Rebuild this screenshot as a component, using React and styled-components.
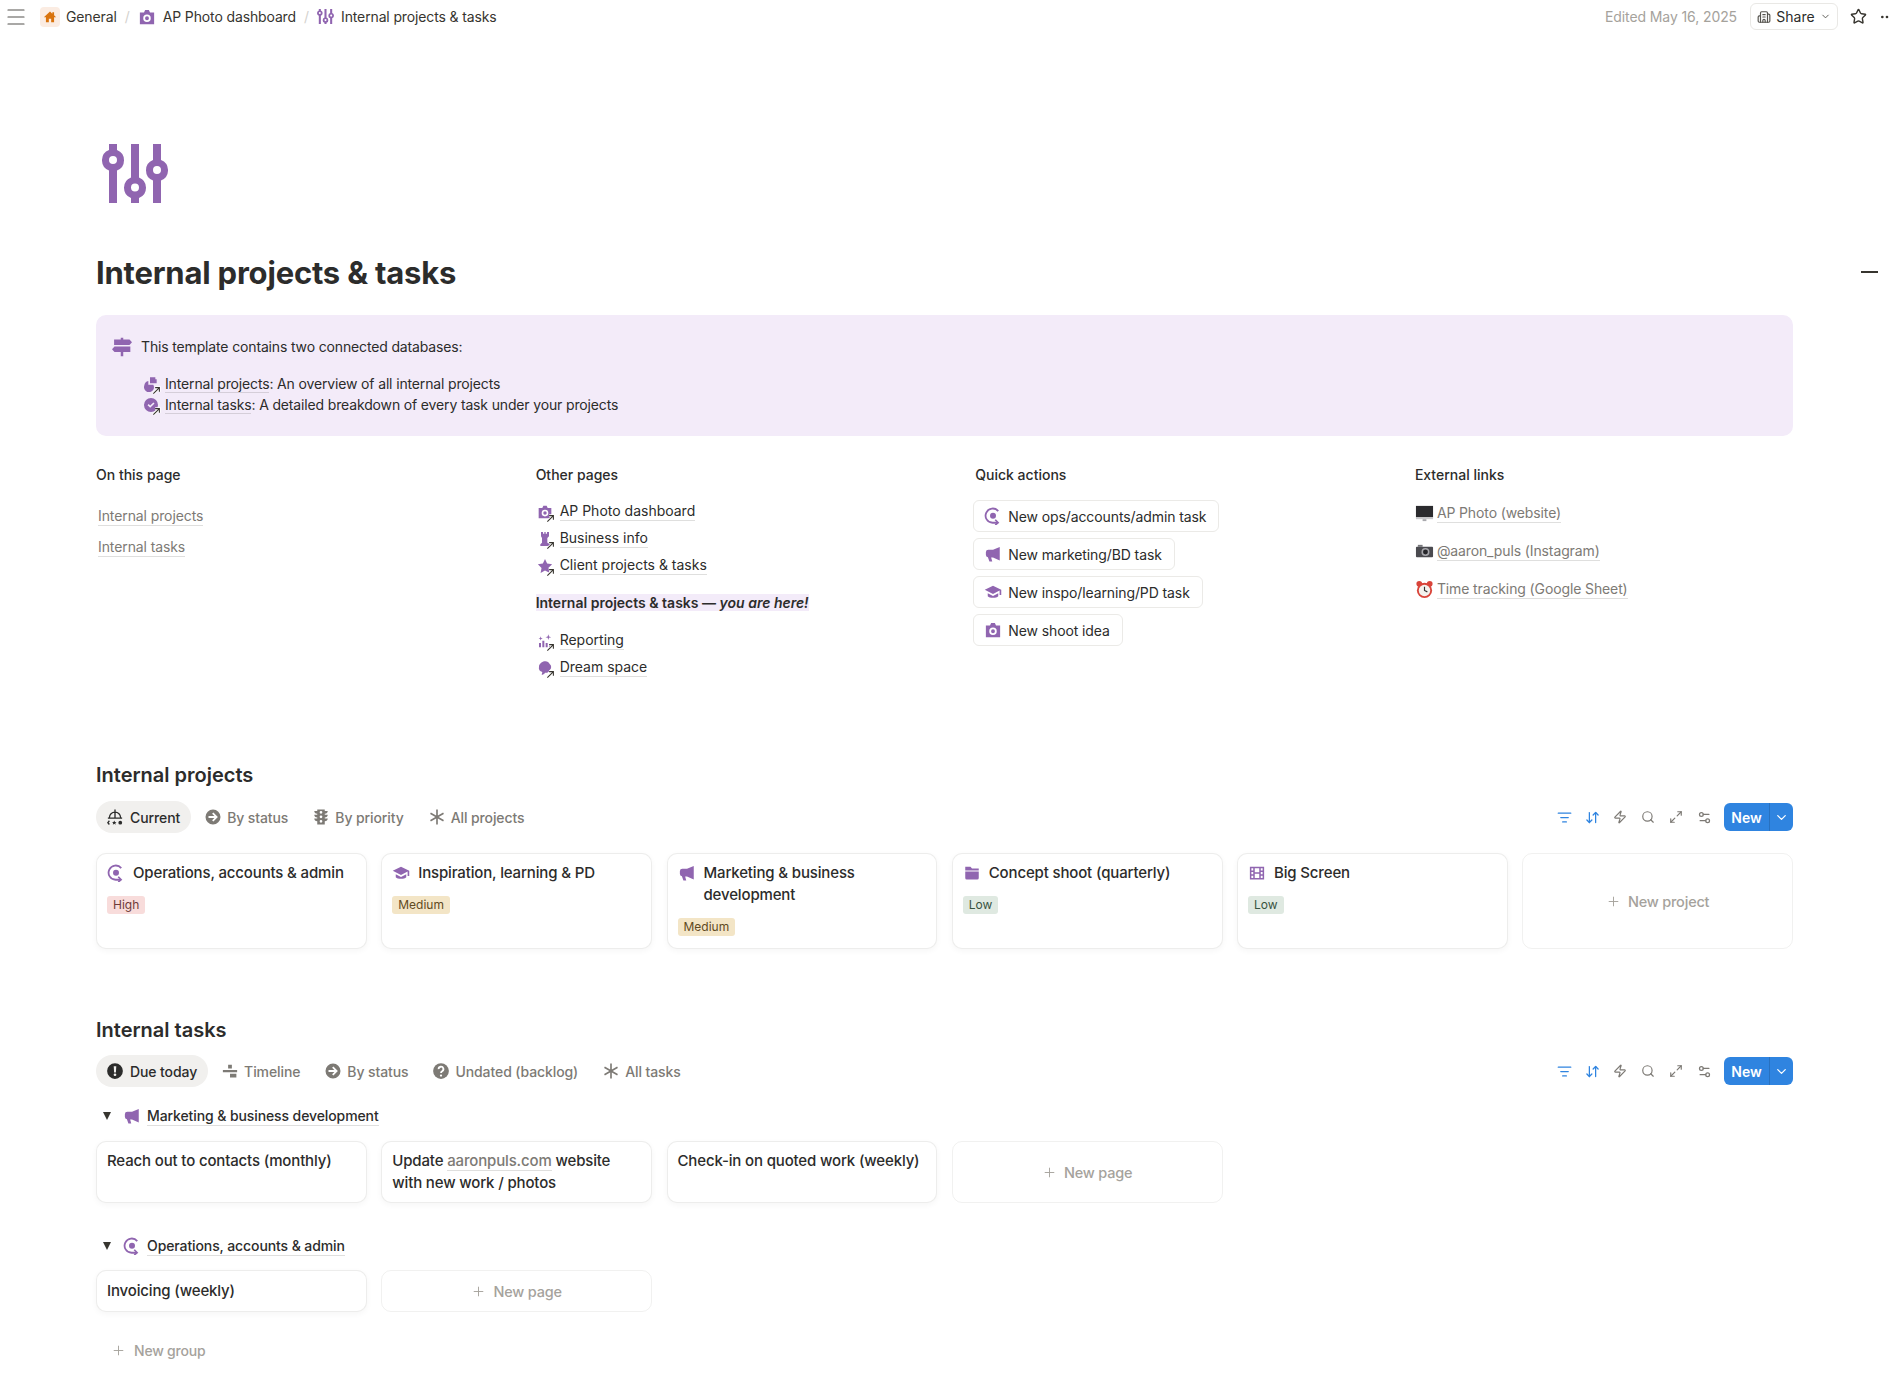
import React from 'react';
import styled, { createGlobalStyle } from 'styled-components';
import {
  ArrowDownUp,
  Building2,
  ChevronDown,
  ListFilter,
  Maximize2,
  Menu,
  MoreHorizontal,
  Plus,
  Search,
  Settings2,
  Star,
  Zap,
} from 'lucide-react';

const theme = {
  text: '#2c2c2b',
  muted: '#7d7a75',
  faint: '#a5a29c',
  purple: '#9065b0',
  callout: '#f3ebf9',
  line: 'rgba(55, 53, 47, 0.16)',
  blue: '#2f84e0',
};

const SLIDERS_PATH = 'M7 0h8v6a11 11 0 0 1 0 20.500V59H7V26.500A11 11 0 0 1 7 6zM11 12a4 4 0 1 0 0 8 4 4 0 0 0 0-8zM29 0h8v33.500a11 11 0 0 1 0 20.500V59h-8v-5a11 11 0 0 1 0-20.500zM33 39.500a4 4 0 1 0 0 8 4 4 0 0 0 0-8zM51 0h8v16a11 11 0 0 1 0 20.500V59h-8V36.500A11 11 0 0 1 51 16zM55 22a4 4 0 1 0 0 8 4 4 0 0 0 0-8z';

const GlobalStyle = createGlobalStyle`
  html, body {
    margin: 0;
    padding: 0;
    height: 100%;
    overflow: hidden;
    background: #fff;
  }
  body {
    font-family: Inter, "Noto Sans", "Liberation Sans", sans-serif;
    color: ${theme.text};
    font-size: 14px;
    -webkit-font-smoothing: antialiased;
  }
`;

// notion style glyphs, drawn on a 24 box
const GLYPHS = {
  home: <path d="M12 2.500 1.500 12.500H5V21h5v-6h4v6h5v-8.500h3.500L19 9.200V4h-3v2.300z" />,
  camera: <path fillRule="evenodd" d="M8 6l1.500-3.500h5L16 6h5.500v15.500h-19V6zM12 8.600a5 5 0 1 0 0 10 5 5 0 0 0 0-10zM12 11a2.600 2.600 0 1 1 0 5.200 2.600 2.600 0 0 1 0-5.200z" />,
  sliders: <path fillRule="evenodd" transform="translate(0 1.300) scale(.3636)" d={SLIDERS_PATH} />,
  signpost: <path d="M10.500 1h3v2H21l3 3.200L21 9.500H2.500V3h8zM3 11.500h19V18h-8.500v5h-3v-5H3l-3-3.200z" />,
  shapes: <path d="M10.500 2h8v3h2v6h-10zM2 14a7.500 7.500 0 0 1 6-6.500V13h7.500A7.500 7.500 0 1 1 2 14z" />,
  badge: <path fillRule="evenodd" d="M12 1.500a10.500 10.500 0 1 0 0 21 10.500 10.500 0 0 0 0-21zM6.800 12.300l1.700-1.700 2.300 2.300 4.800-4.800 1.700 1.700-6.500 6.500z" />,
  rook: <path d="M6 1.500h3V4h2V1.500h2V4h2V1.500h3V8l-2.500 2.500v7L20 20v2.500H5V20l2.500-2.500v-7L6 8z" />,
  star: <path d="M12 1.500l3.200 6.900 7.500.9-5.500 5.200 1.400 7.500L12 18.800 5.400 22.500l1.400-7.500L1.300 9.300l7.500-.9z" />,
  reporting: <path d="M3 21.500V15h3v6.500zM8 21.500V11.500h3v10zM13 21.500V15h3v6.500zM18 21.500V17h3v4.500zM17 2l1 3.200 3.300 1-3.300 1-1 3.300-1-3.300-3.300-1 3.300-1zM5.500 5l.8 2.400 2.400.8-2.400.8-.8 2.400-.8-2.400-2.400-.8 2.400-.8z" />,
  blob: <path d="M11 2c3-1 7 1 8 4 3 2 3 7 0 9-1 3-4 5-7 4-1 2-3 3-5 3l1-4C4 17 2 14 3 10c0-4 4-7 8-8z" />,
  ops: (
    <>
      <path d="M19 5.500A9.500 9.500 0 1 0 11.500 21H18" fill="none" stroke="currentColor" strokeWidth="2.400" />
      <path d="M15 17l3.800 4-3.800 3" fill="none" stroke="currentColor" strokeWidth="2.200" />
      <circle cx="12" cy="11.500" r="4" />
    </>
  ),
  megaphone: <path d="M21 2.500v18l-9-4H9.500l1.500 5.500H7.200l-2-5.700a3.300 3.300 0 0 1-2.700-3.300v-3.500a3.300 3.300 0 0 1 3.300-3.200H12z" />,
  cap: <path d="M12 3.500 1 9l11 5.500 8.800-4.400V16H23V9zM5 13.800v3.700c2.500 3 11.500 3 14 0v-3.700l-7 3.500z" />,
  folder: <path d="M3 3.500h7l2 2.500h9v2.500H3zM3 10h18v8.500a2 2 0 0 1-2 2H5a2 2 0 0 1-2-2z" />,
  film: <path fillRule="evenodd" d="M2.500 3.500h19v17h-19zM4.500 5.500v3H7v-3zM4.500 10.500v3H7v-3zM4.500 15.500v3H7v-3zM17 5.500v3h2.500v-3zM17 10.500v3h2.500v-3zM17 15.500v3h2.500v-3zM9 5.500V11h6V5.500zM9 13v5.500h6V13z" />,
  arrowCircle: <path fillRule="evenodd" d="M12 2a10 10 0 1 0 0 20 10 10 0 0 0 0-20zM12.500 6l6 6-6 6-1.700-1.700 3.100-3.100H6v-2.400h7.900l-3.100-3.100z" />,
  traffic: <path fillRule="evenodd" d="M7 2h10v2h4c0 2-1.500 3.500-4 3.500V9h4c0 2-1.500 3.500-4 3.500V14h4c0 2-1.500 3.500-4 3.500V22H7v-4.500C4.500 17.500 3 16 3 14h4v-1.500C4.500 12.500 3 11 3 9h4V7.500C4.500 7.500 3 6 3 4h4zM12 4a1.800 1.800 0 1 0 0 3.600A1.800 1.800 0 0 0 12 4zM12 10a1.800 1.800 0 1 0 0 3.600 1.800 1.800 0 0 0 0-3.600zM12 16a1.800 1.800 0 1 0 0 3.600 1.800 1.800 0 0 0 0-3.600z" />,
  asterisk: <path d="M12 2v20M3.300 7l17.400 10M20.700 7 3.300 17" fill="none" stroke="currentColor" strokeWidth="2.200" />,
  alert: <path fillRule="evenodd" d="M12 1.500a10.500 10.500 0 1 0 0 21 10.500 10.500 0 0 0 0-21zM10.300 5.500h3.400l-.5 8.500h-2.400zM12 15.200a1.800 1.800 0 1 1 0 3.600 1.800 1.800 0 0 1 0-3.600z" />,
  timeline: <path d="M9.500 3.500h5v5h-5zM2.500 10.500h19v3h-19zM12 15.500h8.500v5H12z" />,
  question: (
    <>
      <circle cx="12" cy="12" r="10.500" />
      <path d="M8.800 9.500a3.200 3.200 0 1 1 4.700 2.800c-1 .6-1.500 1-1.500 2.200" fill="none" stroke="#fff" strokeWidth="2.400" />
      <circle cx="12" cy="18" r="1.500" fill="#fff" />
    </>
  ),
  org: (
    <>
      <path d="M4.500 13a7.500 7.500 0 0 1 15 0M2.500 13.500h19M12 2v12" fill="none" stroke="currentColor" strokeWidth="1.800" />
      <path d="M4.500 17 2.500 19.500l2 2.500" fill="none" stroke="currentColor" strokeWidth="1.800" />
      <path d="M11 16.500l.9 2 2.100.2-1.600 1.400.5 2.100-1.900-1.100-1.900 1.100.5-2.100-1.600-1.400 2.100-.2z" />
      <circle cx="19" cy="19.500" r="2.500" />
    </>
  ),
};

const GlyphSvg = styled.svg`
  width: ${(p) => p.$size || 16}px;
  height: ${(p) => p.$size || 16}px;
  flex: none;
  display: block;
  color: ${(p) => p.$color || theme.purple};
  fill: currentColor;
`;

const Glyph = ({ name, size, color }) => (
  <GlyphSvg viewBox="0 0 24 24" $size={size} $color={color}>
    {GLYPHS[name]}
  </GlyphSvg>
);

const LinkArrow = styled.svg`
  position: absolute;
  right: -2px;
  bottom: -3px;
  width: 9px;
  height: 9px;
  fill: none;
  stroke: #37352f;
  stroke-width: 1.200;
`;

const MentionIcon = styled.span`
  position: relative;
  display: block;
  flex: none;
  width: 16px;
  height: 16px;
`;

const Mention = ({ name }) => (
  <MentionIcon>
    <Glyph name={name} size={16} />
    <LinkArrow viewBox="0 0 10 10">
      <path d="M1.500 8.500 8 2M3.500 1.800H8.200V6.500" stroke="#fff" strokeWidth="3" />
      <path d="M1.500 8.500 8 2M3.500 1.800H8.200V6.500" />
    </LinkArrow>
  </MentionIcon>
);

const Page = styled.div`
  width: 1890px;
  position: relative;
`;

const TopBar = styled.header`
  height: 33px;
  display: flex;
  align-items: center;
  justify-content: space-between;
`;

const Crumbs = styled.nav`
  display: flex;
  align-items: center;
  padding-left: 4px;
  color: #37352f;
  & svg.burger {
    margin-right: 12px;
    color: #55534e;
  }
`;

const HomeTile = styled.span`
  width: 20px;
  height: 20px;
  border-radius: 4px;
  background: #fbece2;
  display: flex;
  align-items: center;
  justify-content: center;
  margin-right: 6px;
`;

const Crumb = styled.span`
  display: flex;
  align-items: center;
  gap: 7px;
  white-space: nowrap;
  font-size: 14px;
  font-weight: 400;
  letter-spacing: -0.13px;
`;

const Slash = styled.span`
  color: #d4d2ce;
  margin: 0 8px;
`;

const TopRight = styled.div`
  display: flex;
  align-items: center;
  width: 285px;
  flex: none;
  & > svg {
    color: #37352f;
    flex: none;
  }
`;

const Edited = styled.span`
  color: ${theme.faint};
  font-size: 14px;
  letter-spacing: -0.1px;
  white-space: nowrap;
  width: 145px;
  flex: none;
`;

const ShareButton = styled.span`
  width: 88px;
  height: 27px;
  flex: none;
  box-sizing: border-box;
  border: 1px solid #e9e8e5;
  border-radius: 6px;
  display: flex;
  align-items: center;
  justify-content: center;
  gap: 5px;
  font-size: 14px;
  margin-right: 12px;
  & svg {
    color: #55534e;
  }
`;

const MoreDots = styled(MoreHorizontal)`
  margin-left: 12px;
`;

const MiniToc = styled.span`
  position: absolute;
  left: 1861px;
  top: 271px;
  width: 17px;
  height: 2px;
  background: #37352f;
`;

const Main = styled.main`
  padding: 0 97px 0 96px;
`;

const PageIcon = styled.svg`
  display: block;
  width: 66px;
  height: 59px;
  margin: 111px 0 0 6px;
  fill: ${theme.purple};
`;

const Title = styled.h1`
  margin: 50px 0 0;
  font-size: 31px;
  line-height: 40px;
  font-weight: 700;
  letter-spacing: -0.2px;
`;

const Callout = styled.section`
  margin-top: 22px;
  padding: 21px 16px;
  height: 121px;
  box-sizing: border-box;
  background: ${theme.callout};
  border-radius: 10px;
  letter-spacing: -0.15px;
`;

const CalloutHead = styled.div`
  display: flex;
  align-items: center;
  gap: 9px;
  line-height: 22px;
`;

const CalloutList = styled.div`
  margin: 15px 0 0 31px;
`;

const CalloutLine = styled.div`
  display: flex;
  align-items: center;
  gap: 6px;
  line-height: 21px;
`;

const Underlined = styled.span`
  border-bottom: 1px solid ${(p) => p.$line || theme.line};
  line-height: 18px;
  color: ${(p) => p.$color || 'inherit'};
`;

const Columns = styled.section`
  margin-top: 29px;
  display: grid;
  grid-template-columns: repeat(4, 1fr);
  column-gap: 61.500px;
`;

const ColumnTitle = styled.h3`
  margin: 0;
  font-size: 14px;
  line-height: 20px;
  font-weight: 500;
`;

const AnchorList = styled.div`
  margin: 22px 0 0 2px;
  display: flex;
  flex-direction: column;
  align-items: flex-start;
  gap: 12px;
  line-height: 22px;
  letter-spacing: -0.1px;
  color: ${theme.muted};
`;

const PageRows = styled.div`
  margin-top: ${(p) => p.$top}px;
`;

const PageRow = styled.div`
  height: 27px;
  display: flex;
  align-items: center;
  gap: 7px;
  padding-left: 1px;
`;

const HereLine = styled.div`
  margin-top: 13px;
  line-height: 22px;
  font-weight: 600;
  & span {
    background: ${theme.callout};
  }
`;

const ActionList = styled.div`
  margin: 15px 0 0 -2px;
  display: flex;
  flex-direction: column;
  align-items: flex-start;
  gap: 6px;
  letter-spacing: -0.1px;
`;

const ActionButton = styled.span`
  height: 32px;
  box-sizing: border-box;
  padding: 0 12px 0 10px;
  border: 1px solid #ebeae7;
  border-radius: 6px;
  display: flex;
  align-items: center;
  gap: 6px;
`;

const LinkList = styled.div`
  margin-top: 9px;
`;

const LinkRow = styled.div`
  height: 38px;
  display: flex;
  align-items: center;
  gap: 3px;
  letter-spacing: -0.12px;
  color: ${theme.muted};
`;

const EmojiSvg = styled.svg`
  width: 19px;
  height: 19px;
  flex: none;
`;

const SectionTitle = styled.h2`
  margin: ${(p) => p.$top}px 0 0;
  font-size: 20px;
  line-height: 30px;
  font-weight: 600;
`;

const ViewBar = styled.div`
  margin-top: ${(p) => p.$top}px;
  height: 32px;
  display: flex;
  align-items: center;
  justify-content: space-between;
`;

const Tabs = styled.div`
  display: flex;
  align-items: center;
  gap: 3px;
`;

const Tab = styled.span`
  height: 32px;
  padding: 0 11px 0 10px;
  border-radius: 16px;
  display: flex;
  align-items: center;
  gap: ${(p) => (p.$active ? 6 : 5)}px;
  white-space: nowrap;
  font-weight: 500;
  letter-spacing: -0.1px;
  color: ${(p) => (p.$active ? theme.text : theme.muted)};
  background: ${(p) => (p.$active ? '#f1f0ee' : 'transparent')};
`;

const Tools = styled.div`
  display: flex;
  align-items: center;
`;

const ToolIcon = styled.span`
  width: 28px;
  display: flex;
  justify-content: center;
  color: ${(p) => (p.$on ? theme.blue : '#7d7a75')};
`;

const NewButton = styled.span`
  margin-left: 6px;
  height: 28px;
  width: 69px;
  border-radius: 6px;
  background: ${theme.blue};
  color: #fff;
  font-weight: 600;
  display: flex;
  overflow: hidden;
`;

const NewLabel = styled.span`
  width: 45px;
  display: flex;
  align-items: center;
  justify-content: center;
  border-right: 1px solid rgba(0, 0, 0, 0.14);
`;

const NewCaret = styled.span`
  flex: 1;
  display: flex;
  align-items: center;
  justify-content: center;
`;

const CardGrid = styled.div`
  margin-top: ${(p) => p.$top}px;
  display: grid;
  grid-template-columns: repeat(6, 1fr);
  gap: 14.500px;
`;

const Card = styled.div`
  height: ${(p) => p.$height}px;
  box-sizing: border-box;
  padding: ${(p) => p.$pad}px 10px 0;
  border: 1px solid rgba(55, 53, 47, 0.09);
  border-radius: 10px;
  background: #fff;
  box-shadow: 0 2px 6px rgba(25, 25, 25, 0.04);
  font-size: 15px;
  font-weight: 500;
  letter-spacing: -0.15px;
  line-height: 22px;
`;

const GhostCard = styled.div`
  height: ${(p) => p.$height}px;
  box-sizing: border-box;
  border: 1px solid rgba(55, 53, 47, 0.07);
  border-radius: 10px;
  display: flex;
  align-items: center;
  justify-content: center;
  gap: 7px;
  font-size: 14.500px;
  font-weight: 500;
  letter-spacing: -0.2px;
  color: ${theme.faint};
`;

const CardTitle = styled.div`
  display: flex;
  align-items: flex-start;
  gap: 8px;
  & > svg {
    margin-top: 2px;
  }
`;

const Tag = styled.span`
  display: inline-block;
  margin-top: 12px;
  height: 18px;
  padding: 0 6px;
  border-radius: 3px;
  font-size: 12px;
  font-weight: 400;
  letter-spacing: 0;
  line-height: 18px;
  background: ${(p) => p.$bg};
  color: ${(p) => p.$fg};
`;

const GroupRow = styled.div`
  margin-top: ${(p) => p.$top}px;
  height: 22px;
  display: flex;
  align-items: center;
  padding-left: 7px;
  font-weight: 500;
  letter-spacing: -0.1px;
`;

const Caret = styled.span`
  width: 0;
  height: 0;
  border-left: 4.500px solid transparent;
  border-right: 4.500px solid transparent;
  border-top: 8px solid #37352f;
  margin-right: 12px;
`;

const GroupName = styled(Underlined)`
  margin-left: 6px;
`;

const NewGroup = styled.div`
  margin: 27px 0 0 15px;
  height: 22px;
  display: flex;
  align-items: center;
  gap: 8px;
  color: ${theme.faint};
  font-weight: 500;
  letter-spacing: -0.2px;
`;

const TAGS = {
  High: { bg: '#f8dcdb', fg: '#6f3a38' },
  Medium: { bg: '#f3e5c6', fg: '#5f4a22' },
  Low: { bg: '#dfe9e1', fg: '#37533f' },
};

const projects = [
  { icon: 'ops', title: 'Operations, accounts & admin', tag: 'High' },
  { icon: 'cap', title: 'Inspiration, learning & PD', tag: 'Medium' },
  { icon: 'megaphone', title: 'Marketing & business development', tag: 'Medium' },
  { icon: 'folder', title: 'Concept shoot (quarterly)', tag: 'Low' },
  { icon: 'film', title: 'Big Screen', tag: 'Low' },
];

const otherTop = [
  { icon: 'camera', label: 'AP Photo dashboard' },
  { icon: 'rook', label: 'Business info' },
  { icon: 'star', label: 'Client projects & tasks' },
];

const otherBottom = [
  { icon: 'reporting', label: 'Reporting' },
  { icon: 'blob', label: 'Dream space' },
];

const actions = [
  { icon: 'ops', label: 'New ops/accounts/admin task' },
  { icon: 'megaphone', label: 'New marketing/BD task' },
  { icon: 'cap', label: 'New inspo/learning/PD task' },
  { icon: 'camera', label: 'New shoot idea' },
];

const projectTabs = [
  { icon: 'org', label: 'Current', active: true },
  { icon: 'arrowCircle', label: 'By status' },
  { icon: 'traffic', label: 'By priority' },
  { icon: 'asterisk', label: 'All projects' },
];

const taskTabs = [
  { icon: 'alert', label: 'Due today', active: true },
  { icon: 'timeline', label: 'Timeline' },
  { icon: 'arrowCircle', label: 'By status' },
  { icon: 'question', label: 'Undated (backlog)' },
  { icon: 'asterisk', label: 'All tasks' },
];

const MonitorEmoji = () => (
  <EmojiSvg viewBox="0 0 20 20">
    <rect x="1" y="2" width="18" height="12" fill="#2b2b2e" />
    <rect x="1" y="14" width="18" height="2" fill="#c9c9cc" />
    <rect x="8" y="16" width="4" height="2" fill="#a9a9ad" />
  </EmojiSvg>
);

const CameraEmoji = () => (
  <EmojiSvg viewBox="0 0 20 20">
    <rect x="3" y="3" width="5" height="2" fill="#77777b" />
    <rect x="1" y="5" width="18" height="11" rx="1" fill="#4a4a4f" />
    <circle cx="11" cy="10.500" r="4.200" fill="#a7a7ac" />
    <circle cx="11" cy="10.500" r="2.600" fill="#26262a" />
  </EmojiSvg>
);

const ClockEmoji = () => (
  <EmojiSvg viewBox="0 0 20 20">
    <circle cx="4.500" cy="4" r="3" fill="#d9443a" />
    <circle cx="15.500" cy="4" r="3" fill="#d9443a" />
    <circle cx="10" cy="11" r="8" fill="#d9443a" />
    <circle cx="10" cy="11" r="6" fill="#f4f2ee" />
    <path d="M10 7v4l3 1.500" fill="none" stroke="#333" strokeWidth="1.200" />
  </EmojiSvg>
);

function ViewToolbar() {
  return (
    <Tools>
      <ToolIcon $on><ListFilter size={15} /></ToolIcon>
      <ToolIcon $on><ArrowDownUp size={15} /></ToolIcon>
      <ToolIcon><Zap size={14} /></ToolIcon>
      <ToolIcon><Search size={14} /></ToolIcon>
      <ToolIcon><Maximize2 size={14} /></ToolIcon>
      <ToolIcon><Settings2 size={15} /></ToolIcon>
      <NewButton>
        <NewLabel>New</NewLabel>
        <NewCaret><ChevronDown size={15} /></NewCaret>
      </NewButton>
    </Tools>
  );
}

function ViewTabs({ items }) {
  return (
    <Tabs>
      {items.map((t) => (
        <Tab key={t.label} $active={t.active}>
          <Glyph name={t.icon} size={18} color={t.active ? '#2c2c2b' : '#7d7a75'} />
          {t.label}
        </Tab>
      ))}
    </Tabs>
  );
}

function App() {
  return (
    <Page>
      <GlobalStyle />
      <TopBar>
        <Crumbs>
          <Menu className="burger" size={24} strokeWidth={1.200} />
          <HomeTile><Glyph name="home" size={14} color="#d9730d" /></HomeTile>
          <Crumb>General</Crumb>
          <Slash>/</Slash>
          <Crumb><Glyph name="camera" size={18} />AP Photo dashboard</Crumb>
          <Slash>/</Slash>
          <Crumb><Glyph name="sliders" size={17} />Internal projects &amp; tasks</Crumb>
        </Crumbs>
        <TopRight>
          <Edited>Edited May 16, 2025</Edited>
          <ShareButton>
            <Building2 size={14} />
            Share
            <ChevronDown size={11} />
          </ShareButton>
          <Star size={17} />
          <MoreDots size={16} />
        </TopRight>
      </TopBar>
      <MiniToc />
      <Main>
        <PageIcon viewBox="0 0 66 59">
          <path fillRule="evenodd" d={SLIDERS_PATH} />
        </PageIcon>
        <Title>Internal projects &amp; tasks</Title>
        <Callout>
          <CalloutHead>
            <Glyph name="signpost" size={20} />
            This template contains two connected databases:
          </CalloutHead>
          <CalloutList>
            <CalloutLine>
              <Mention name="shapes" />
              <span><Underlined>Internal projects</Underlined>: An overview of all internal projects</span>
            </CalloutLine>
            <CalloutLine>
              <Mention name="badge" />
              <span><Underlined>Internal tasks</Underlined>: A detailed breakdown of every task under your projects</span>
            </CalloutLine>
          </CalloutList>
        </Callout>
        <Columns>
          <div>
            <ColumnTitle>On this page</ColumnTitle>
            <AnchorList>
              <Underlined>Internal projects</Underlined>
              <Underlined>Internal tasks</Underlined>
            </AnchorList>
          </div>
          <div>
            <ColumnTitle>Other pages</ColumnTitle>
            <PageRows $top={13}>
              {otherTop.map((p) => (
                <PageRow key={p.label}><Mention name={p.icon} /><Underlined>{p.label}</Underlined></PageRow>
              ))}
            </PageRows>
            <HereLine><span>Internal projects &amp; tasks — <em>you are here!</em></span></HereLine>
            <PageRows $top={13}>
              {otherBottom.map((p) => (
                <PageRow key={p.label}><Mention name={p.icon} /><Underlined>{p.label}</Underlined></PageRow>
              ))}
            </PageRows>
          </div>
          <div>
            <ColumnTitle>Quick actions</ColumnTitle>
            <ActionList>
              {actions.map((a) => (
                <ActionButton key={a.label}><Glyph name={a.icon} size={18} />{a.label}</ActionButton>
              ))}
            </ActionList>
          </div>
          <div>
            <ColumnTitle>External links</ColumnTitle>
            <LinkList>
              <LinkRow><MonitorEmoji /><Underlined>AP Photo (website)</Underlined></LinkRow>
              <LinkRow><CameraEmoji /><Underlined>@aaron_puls (Instagram)</Underlined></LinkRow>
              <LinkRow><ClockEmoji /><Underlined>Time tracking (Google Sheet)</Underlined></LinkRow>
            </LinkList>
          </div>
        </Columns>

        <SectionTitle $top={79}>Internal projects</SectionTitle>
        <ViewBar $top={11}>
          <ViewTabs items={projectTabs} />
          <ViewToolbar />
        </ViewBar>
        <CardGrid $top={20}>
          {projects.map((p) => (
            <Card key={p.title} $height={96} $pad={8}>
              <CardTitle><Glyph name={p.icon} size={18} />{p.title}</CardTitle>
              <Tag $bg={TAGS[p.tag].bg} $fg={TAGS[p.tag].fg}>{p.tag}</Tag>
            </Card>
          ))}
          <GhostCard $height={96}><Plus size={15} strokeWidth={1.500} />New project</GhostCard>
        </CardGrid>

        <SectionTitle $top={66}>Internal tasks</SectionTitle>
        <ViewBar $top={10}>
          <ViewTabs items={taskTabs} />
          <ViewToolbar />
        </ViewBar>
        <GroupRow $top={18}>
          <Caret />
          <Glyph name="megaphone" size={18} />
          <GroupName>Marketing &amp; business development</GroupName>
        </GroupRow>
        <CardGrid $top={14}>
          <Card $height={62} $pad={8}>Reach out to contacts (monthly)</Card>
          <Card $height={62} $pad={8}>
            Update <Underlined $color={theme.muted}>aaronpuls.com</Underlined> website with new work / photos
          </Card>
          <Card $height={62} $pad={8}>Check-in on quoted work (weekly)</Card>
          <GhostCard $height={62}><Plus size={15} strokeWidth={1.500} />New page</GhostCard>
        </CardGrid>
        <GroupRow $top={32}>
          <Caret />
          <Glyph name="ops" size={18} />
          <GroupName>Operations, accounts &amp; admin</GroupName>
        </GroupRow>
        <CardGrid $top={13}>
          <Card $height={42} $pad={9}>Invoicing (weekly)</Card>
          <GhostCard $height={42}><Plus size={15} strokeWidth={1.500} />New page</GhostCard>
        </CardGrid>
        <NewGroup><Plus size={15} strokeWidth={1.500} />New group</NewGroup>
      </Main>
    </Page>
  );
}

export default App;
